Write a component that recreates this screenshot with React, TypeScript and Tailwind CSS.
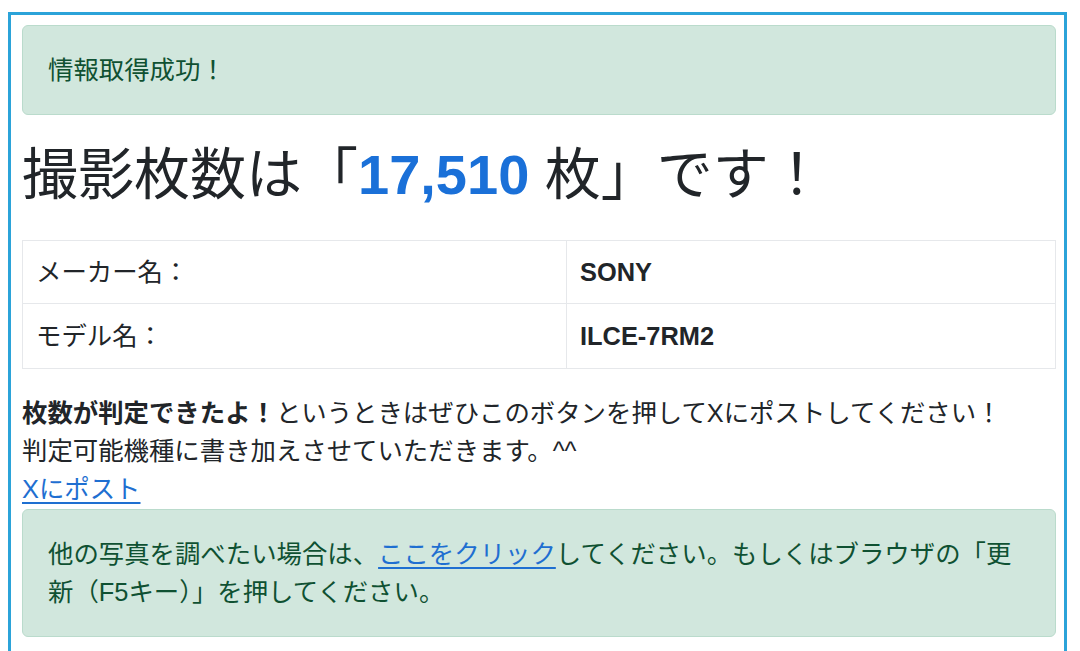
import React from "react";

export default function App() {
  return (
    <div className="min-h-[651px] bg-white pt-[12px] pl-[8px] font-['Liberation_Sans','Noto_Sans_CJK_JP',sans-serif] text-[#212529]">
      <div className="w-[1059px] border-[3px] border-[#2ba3d9] pt-[10px] pl-[11px] pr-[8px] pb-[60px]">
        <div className="rounded-[6px] border border-[#badbcc] bg-[#d1e7dd] px-[25px] py-[25px] text-[25.4px] leading-[38px] text-[#0f5132]">
          情報取得成功！
        </div>

        <h1 className="mt-[25px] mb-[30px] text-[56px] leading-[70px] font-normal">
          撮影枚数は「<span className="font-bold text-[#1a70d8]">17,510</span> 枚」です！
        </h1>

        <table className="w-full border-collapse text-[25.4px] leading-[38px]">
          <tbody>
            <tr>
              <td className="w-[544px] border border-[#e6e8eb] px-[13px] py-[12px]">メーカー名：</td>
              <td className="border border-[#e6e8eb] px-[13px] py-[12px] font-bold">SONY</td>
            </tr>
            <tr>
              <td className="w-[544px] border border-[#e6e8eb] px-[13px] py-[13px]">モデル名：</td>
              <td className="border border-[#e6e8eb] px-[13px] py-[13px] font-bold">ILCE-7RM2</td>
            </tr>
          </tbody>
        </table>

        <p className="mt-[25px] text-[25.4px] leading-[38px]">
          <span className="font-bold">枚数が判定できたよ！</span>というときはぜひこのボタンを押してXにポストしてください！
          <br />
          判定可能機種に書き加えさせていただきます。^^
          <br />
          <a href="#" className="text-[#1f6fd1] underline underline-offset-[4px]">Xにポスト</a>
        </p>

        <div className="mt-[1px] rounded-[6px] border border-[#badbcc] bg-[#d1e7dd] px-[25px] py-[25px] text-[25.4px] leading-[38px] text-[#0f5132]">
          他の写真を調べたい場合は、<a href="#" className="text-[#1f6fd1] underline underline-offset-[4px]">ここをクリック</a>してください。もしくはブラウザの「更
          <br />
          新（F5キー）」を押してください。
        </div>
      </div>
    </div>
  );
}
